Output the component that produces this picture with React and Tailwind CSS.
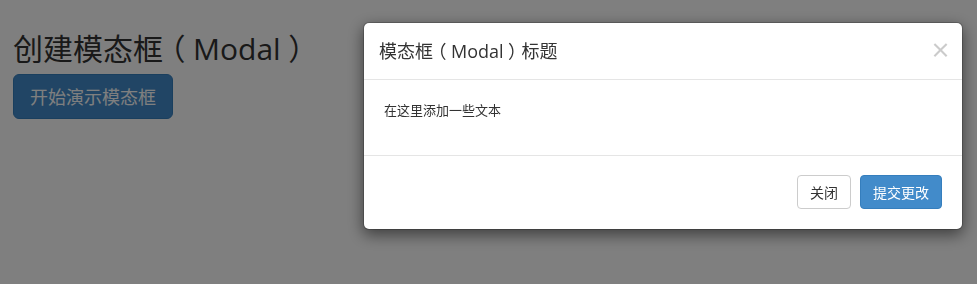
import React from 'react';

const font = { fontFamily: '"Noto Sans CJK SC", "Noto Sans", sans-serif' };

// full-width bracket drawn centred in its em box, like YaHei does
function P({ children }) {
  return <span className="px-[0.25em] [font-feature-settings:'halt']">{children}</span>;
}

// latin run, closer to the Segoe look of the original
function L({ children }) {
  return <span className="font-['Open_Sans',sans-serif] leading-none">{children}</span>;
}

function ModalDemo() {
  return (
    <div className="fixed left-[363px] top-[22px] w-[600px] rounded-[6px] border border-black/20 bg-white bg-clip-padding shadow-[0_5px_15px_rgba(0,0,0,0.5)]">
      <div className="border-b border-[#e5e5e5] p-[15px]">
        <button
          type="button"
          className="float-right -mr-[4px] mt-[1px] text-[21px] font-bold leading-none text-black opacity-20"
        >
          ×
        </button>
        <h4 className="m-0 text-[18px] font-normal leading-[1.428571] text-[#333]">
          模态框<P>（</P><L>Modal</L><P>）</P>标题
        </h4>
      </div>
      <div className="p-[20px] text-[13px] leading-[20px] text-[#333]">在这里添加一些文本</div>
      <div className="mt-[15px] flex justify-end gap-[9px] border-t border-[#e5e5e5] px-[20px] pt-[19px] pb-[20px]">
        <button
          type="button"
          className="rounded-[4px] border border-[#ccc] bg-white px-[12px] py-[6px] text-[14px] leading-[20px] text-[#333]"
        >
          关闭
        </button>
        <button
          type="button"
          className="rounded-[4px] border border-[#357ebd] bg-[#428bca] px-[12px] py-[6px] text-[14px] leading-[20px] text-white"
        >
          提交更改
        </button>
      </div>
    </div>
  );
}

export default function App() {
  return (
    <div className="relative h-[284px] overflow-hidden bg-white" style={font}>
      <div className="px-[13px] pt-[31px]">
        <h2 className="mb-[10px] text-[30px] font-normal leading-[33px] text-[#333]">
          创建模态框<P>（</P><L>Modal</L><P>）</P>
        </h2>
        <button
          type="button"
          className="rounded-[6px] border border-[#357ebd] bg-[#428bca] px-[16px] py-[10px] text-[18px] leading-[23px] text-white"
        >
          开始演示模态框
        </button>
      </div>

      {/* backdrop */}
      <div className="fixed inset-0 bg-black/50" />
      <ModalDemo />
    </div>
  );
}
